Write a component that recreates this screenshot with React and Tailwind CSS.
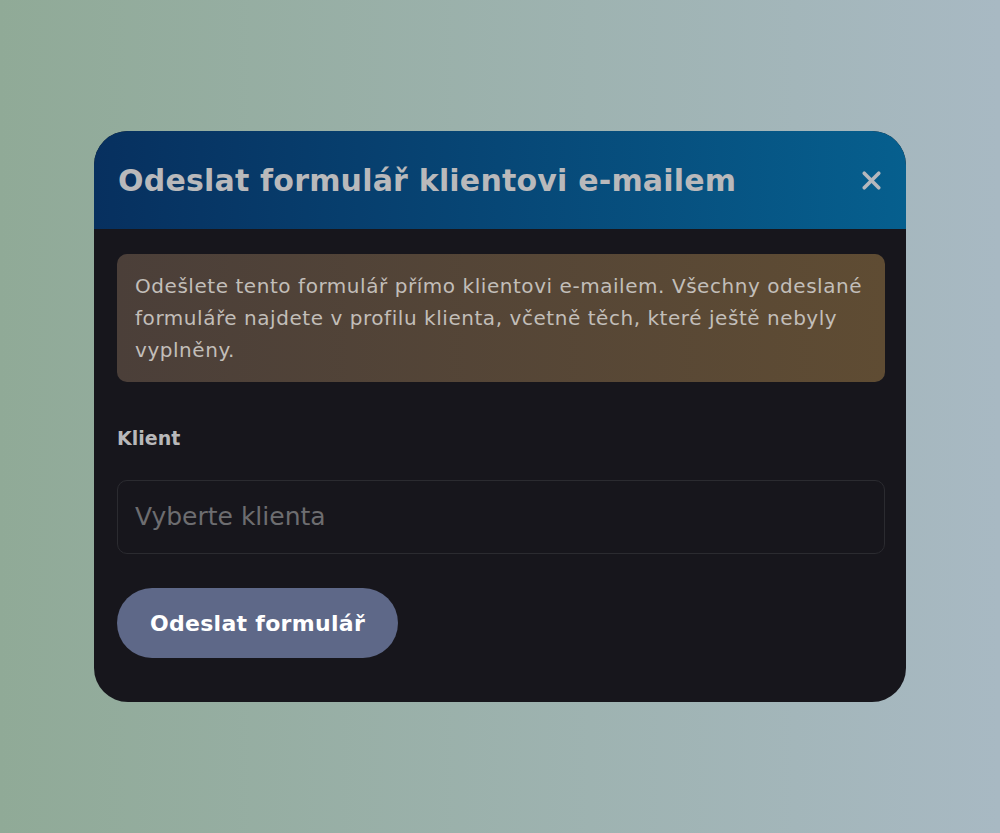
import React from 'react';
import { X } from 'lucide-react';

const App = () => {
  return (
    <div className="min-h-[833px] w-full bg-gradient-to-r from-[#90aa97] to-[#a8b9c3] flex justify-center pt-[131px] font-['DejaVu_Sans',sans-serif]">
      <div className="w-[812px] h-[571px] rounded-[34px] overflow-hidden bg-[#17161c] flex flex-col">
        {/* Header */}
        <div className="h-[98px] bg-gradient-to-r from-[#07305f] to-[#065f8e] flex items-center justify-between pl-[24px] pr-[20px]">
          <h2 className="text-[30px] font-bold text-[#b9b9bb] tracking-[0.2px]">Odeslat formulář klientovi e-mailem</h2>
          <X className="w-[29px] h-[29px] text-[#b5b8bd]" strokeWidth={3} />
        </div>

        {/* Body */}
        <div className="pl-[23px] pr-[21px] pt-[25px] flex flex-col">
          <div className="rounded-[10px] bg-gradient-to-r from-[#4b3f39] to-[#5f4c33] px-[18px] py-[16px] text-[20px] leading-[32px] tracking-[0.55px] text-[#c2beb9]">
            Odešlete tento formulář přímo klientovi e-mailem. Všechny odeslané formuláře najdete v profilu klienta, včetně těch, které ještě nebyly vyplněny.
          </div>

          <label className="mt-[43px] text-[19px] leading-[26px] font-bold text-[#b8b8b9]">Klient</label>

          <div className="mt-[29px] h-[74px] rounded-[10px] border border-[#2b2b30] flex items-center px-[17px]">
            <span className="text-[25px] text-[#6d6d70]">Vyberte klienta</span>
          </div>

          <button className="mt-[34px] w-[281px] h-[70px] rounded-full bg-[#5e6888] text-white text-[22px] tracking-[0.3px] font-bold">
            Odeslat formulář
          </button>
        </div>
      </div>
    </div>
  );
};

export default App;
